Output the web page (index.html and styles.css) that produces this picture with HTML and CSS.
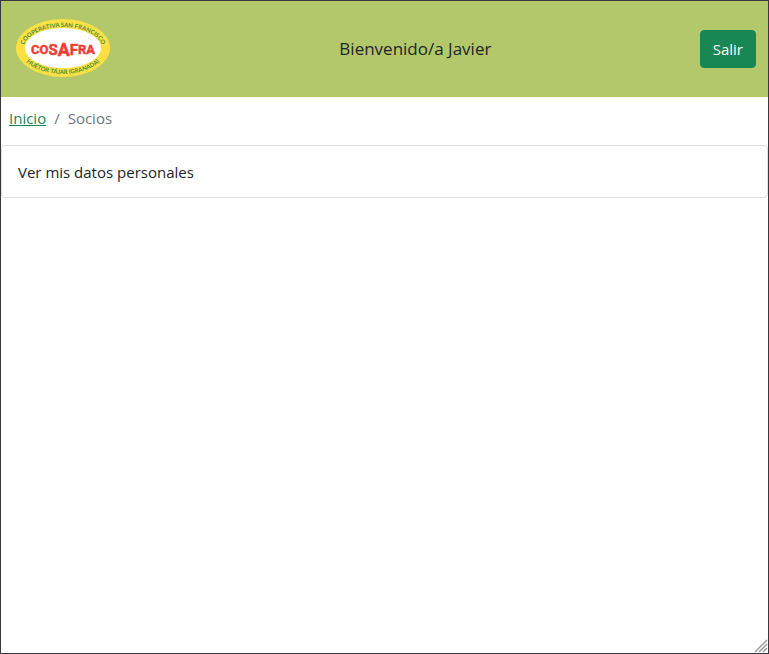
FILE: index.html
```html
<!DOCTYPE html>
<html lang="es">
<head>
<meta charset="utf-8">
<meta name="viewport" content="width=device-width, initial-scale=1">
<title>Socios</title>
<link rel="stylesheet" href="styles.css">
</head>
<body>
<div class="page">
  <header class="header">
    <svg class="logo" viewBox="0 0 96 60" role="img" aria-label="Cosafra">
      <defs>
        <path id="arc-top" d="M8 31A40 23 0 0 1 88 31"/>
        <path id="arc-bottom" d="M4 28A44 27 0 0 0 92 28"/>
      </defs>
      <ellipse class="logo-ring" cx="48" cy="29" rx="47" ry="29"/>
      <ellipse class="logo-center" cx="48" cy="29" rx="38" ry="20"/>
      <text class="logo-small"><textPath href="#arc-top" startOffset="50%">COOPERATIVA SAN FRANCISCO</textPath></text>
      <text class="logo-small"><textPath href="#arc-bottom" startOffset="50%">HUÉTOR TÁJAR (GRANADA)</textPath></text>
      <text class="logo-name" x="48" y="35">CO<tspan font-size="15" dy="1">S</tspan><tspan font-size="18" dy="1">A</tspan><tspan font-size="15" dy="-1">F</tspan><tspan dy="-1">RA</tspan></text>
    </svg>
    <span class="welcome">Bienvenido/a Javier</span>
    <button class="button" type="button">Salir</button>
  </header>
  <nav aria-label="Ruta">
    <ol class="breadcrumb">
      <li><a href="#">Inicio</a></li>
      <li class="current" aria-current="page">Socios</li>
    </ol>
  </nav>
  <main>
    <a class="list-item" href="#">Ver mis datos personales</a>
  </main>
  <svg class="grip" viewBox="0 0 14 14" aria-hidden="true">
    <path d="M1 13L13 1M5 13L13 5M9 13L13 9"/>
  </svg>
</div>
</body>
</html>
```
FILE: styles.css
```css
* {
  box-sizing: border-box;
}

body {
  margin: 0;
  background: #fff;
  color: #212529;
  font: 15px/24px "Segoe UI", "Open Sans", "Noto Sans", sans-serif;
}

.page {
  position: relative;
  min-height: 100vh;
  border: 1px solid #38383d;
}

.header {
  display: flex;
  align-items: center;
  justify-content: space-between;
  padding: 18px 12px 18px 14px;
  background: #b2c86b;
}

.logo {
  width: 96px;
  height: 60px;
  margin-right: 20px;
}

.logo-ring {
  fill: #fee045;
}

.logo-center {
  fill: #fff;
}

.logo-small {
  fill: #45913a;
  font: bold 6px Lato, sans-serif;
  text-anchor: middle;
}

.logo-name {
  fill: #ee3d37;
  stroke: #ee3d37;
  stroke-width: 0.5;
  font-family: Roboto, sans-serif;
  font-size: 13px;
  font-weight: bold;
  text-anchor: middle;
}

.welcome {
  font-size: 17px;
}

.button {
  padding: 6px 12px;
  border: 1px solid #198754;
  border-radius: 4px;
  background: #198754;
  color: #fff;
  font: inherit;
  cursor: pointer;
}

.breadcrumb {
  display: flex;
  margin: 0;
  padding: 9px 8px 15px;
  list-style: none;
}

.breadcrumb a {
  color: #198754;
}

.current {
  color: #6c757d;
}

.current::before {
  content: "/";
  padding: 0 8px;
}

.list-item {
  display: block;
  padding: 14px 16px 13px;
  border: 1px solid #dfdfdf;
  border-radius: 4px;
  color: #212529;
  text-decoration: none;
}

.grip {
  position: absolute;
  right: 0;
  bottom: 0;
  width: 14px;
  height: 14px;
  fill: none;
  stroke: #999;
  stroke-width: 1.5;
}
```
